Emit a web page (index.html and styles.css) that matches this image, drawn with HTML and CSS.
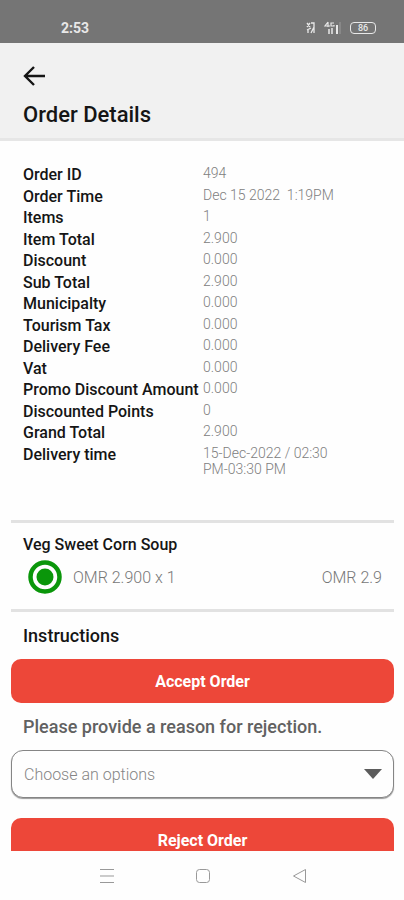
FILE: index.html
```html
<!DOCTYPE html>
<html lang="en">
<head>
<meta charset="utf-8">
<meta name="viewport" content="width=device-width, initial-scale=1">
<title>Order Details</title>
<link rel="stylesheet" href="styles.css">
</head>
<body>
<div class="status">
  <span class="clock">2:53</span>
  <div class="indicators">
    <svg width="10" height="12" viewBox="0 0 10 12" fill="none" stroke="currentColor" stroke-width="1.3"><path d="M1 1l3 4M4 1L1 5M5 1h3v10M2 7v4M5 11l3-6M1 8l4-2"/></svg>
    <svg width="18" height="14" viewBox="0 0 18 14" fill="none" stroke="currentColor"><path d="M4 1L1 5h5M4 1v5M10 2H7v3h3V4" stroke-width="1.2"/><path d="M5 8v5M8 7v6" stroke-width="1.5"/><path d="M13 4v9" stroke-width="2"/><path d="M16 1v12" opacity=".35"/></svg>
    <span class="battery">86</span>
  </div>
</div>
<header class="header">
  <button class="back" aria-label="Back">
    <svg width="24" height="20" viewBox="0 0 24 20" fill="none" stroke="currentColor" stroke-width="2.4"><path d="M22 10H2M11 1L2 10l9 9"/></svg>
  </button>
  <h1 class="title">Order Details</h1>
</header>
<main class="content">
  <dl class="details">
    <dt>Order ID</dt><dd>494</dd>
    <dt>Order Time</dt><dd>Dec 15 2022  1:19PM</dd>
    <dt>Items</dt><dd>1</dd>
    <dt>Item Total</dt><dd>2.900</dd>
    <dt>Discount</dt><dd>0.000</dd>
    <dt>Sub Total</dt><dd>2.900</dd>
    <dt>Municipalty</dt><dd>0.000</dd>
    <dt>Tourism Tax</dt><dd>0.000</dd>
    <dt>Delivery Fee</dt><dd>0.000</dd>
    <dt>Vat</dt><dd>0.000</dd>
    <dt>Promo Discount Amount</dt><dd>0.000</dd>
    <dt>Discounted Points</dt><dd>0</dd>
    <dt>Grand Total</dt><dd>2.900</dd>
    <dt>Delivery time</dt><dd>15-Dec-2022 / 02:30 PM-03:30 PM</dd>
  </dl>
  <section class="item">
    <h2 class="item-name">Veg Sweet Corn Soup</h2>
    <div class="item-line">
      <svg width="34" height="34" viewBox="0 0 34 34"><circle cx="17" cy="17" r="14.5" fill="none" stroke="#0a960a" stroke-width="4.5"/><circle cx="17" cy="17" r="8.5" fill="#0a960a"/></svg>
      <span>OMR 2.900 x 1</span>
      <span class="amount">OMR 2.9</span>
    </div>
  </section>
  <h2 class="instructions">Instructions</h2>
  <button class="action">Accept Order</button>
  <label class="reason" for="reason">Please provide a reason for rejection.</label>
  <div class="picker">
    <select id="reason"><option>Choose an options</option></select>
    <svg class="caret" width="18" height="10" viewBox="0 0 18 10"><path d="M0 0h18L9 10z" fill="#5c5c5c"/></svg>
  </div>
  <button class="action">Reject Order</button>
</main>
<nav class="navbar">
  <button aria-label="Recent apps"><svg width="16" height="16" viewBox="0 0 16 16" fill="none" stroke="currentColor"><path d="M1 1.5h14M1 8h14M1 14.5h14"/></svg></button>
  <button aria-label="Home"><svg width="16" height="16" viewBox="0 0 16 16" fill="none" stroke="currentColor"><rect x="1.5" y="1.5" width="13" height="13" rx="3"/></svg></button>
  <button aria-label="Go back"><svg width="16" height="16" viewBox="0 0 16 16" fill="none" stroke="currentColor" stroke-linejoin="round"><path d="M14.500 1.500v13L2.500 8z"/></svg></button>
</nav>
</body>
</html>
```
FILE: styles.css
```css
* {
  box-sizing: border-box;
}

body {
  margin: 0;
  height: 100vh;
  display: flex;
  flex-direction: column;
  background: #fefefe;
  color: #151515;
  font-family: Roboto, "Liberation Sans", sans-serif;
  font-size: 16px;
}

h1, h2, dl, dd {
  margin: 0;
}

button {
  padding: 0;
  border: 0;
  background: none;
  color: inherit;
  font: inherit;
}

svg {
  display: block;
  flex: none;
}

.status {
  flex: none;
  display: flex;
  justify-content: space-between;
  align-items: center;
  padding: 12px 28px 0 61px;
  height: 43px;
  background: #757575;
  color: #e8e8e8;
}

.clock {
  font-size: 14px;
  font-weight: 700;
}

.indicators {
  display: flex;
  align-items: center;
  gap: 8px;
}

.battery {
  width: 26px;
  height: 12px;
  border: 1px solid currentColor;
  border-radius: 4px;
  font-size: 9px;
  font-weight: 500;
  line-height: 10px;
  text-align: center;
}

.header {
  flex: none;
  padding: 23px 23px 11px;
  border-bottom: 3px solid #e6e6e6;
  background: #f1f1f1;
}

.back {
  display: block;
}

.title {
  margin-top: 17px;
  font-size: 22px;
  font-weight: 500;
  line-height: 24px;
}

.content {
  flex: 1;
  min-height: 0;
  overflow: hidden;
  padding: 23px 10px 0 11px;
}

.details {
  display: grid;
  grid-template-columns: 180px 1fr;
  min-height: 313px;
  padding: 0 48px 0 12px;
}

.details dt {
  font-weight: 500;
  line-height: 21px;
  white-space: nowrap;
}

.details dd {
  padding-top: 1px;
  color: #808080;
  font-size: 14px;
  font-weight: 300;
  line-height: 16px;
  white-space: pre-wrap;
}

.item {
  margin-top: 43px;
  padding: 12px 12px 15px;
  border: solid #e2e2e2;
  border-width: 3px 0;
}

.item-name {
  font-size: 16px;
  font-weight: 500;
  line-height: 20px;
}

.item-line {
  display: flex;
  align-items: center;
  gap: 11px;
  margin-top: 5px;
  padding-left: 5px;
  color: #777;
  font-weight: 300;
}

.amount {
  margin-left: auto;
}

.instructions {
  margin: 13px 12px 12px;
  font-size: 18px;
  font-weight: 500;
  line-height: 22px;
}

.action {
  display: block;
  width: 100%;
  height: 44px;
  border-radius: 10px;
  background: #ed4739;
  color: #fff;
  font-weight: 700;
}

.reason {
  display: block;
  margin: 13px 12px 12px;
  color: #616161;
  font-size: 18px;
  font-weight: 500;
  line-height: 22px;
}

.picker {
  position: relative;
  margin-bottom: 20px;
}

.picker select {
  appearance: none;
  display: block;
  width: 100%;
  height: 48px;
  padding: 0 12px;
  border: 1px solid #858585;
  border-radius: 12px;
  background: #fefefe;
  box-shadow: 0 1px 1px #999;
  color: #858585;
  font: 300 16px Roboto, "Liberation Sans", sans-serif;
}

.caret {
  position: absolute;
  top: 19px;
  right: 12px;
  pointer-events: none;
}

.navbar {
  flex: none;
  display: flex;
  justify-content: center;
  align-items: center;
  gap: 80px;
  height: 49px;
  padding-left: 2px;
  color: #999;
}
```
